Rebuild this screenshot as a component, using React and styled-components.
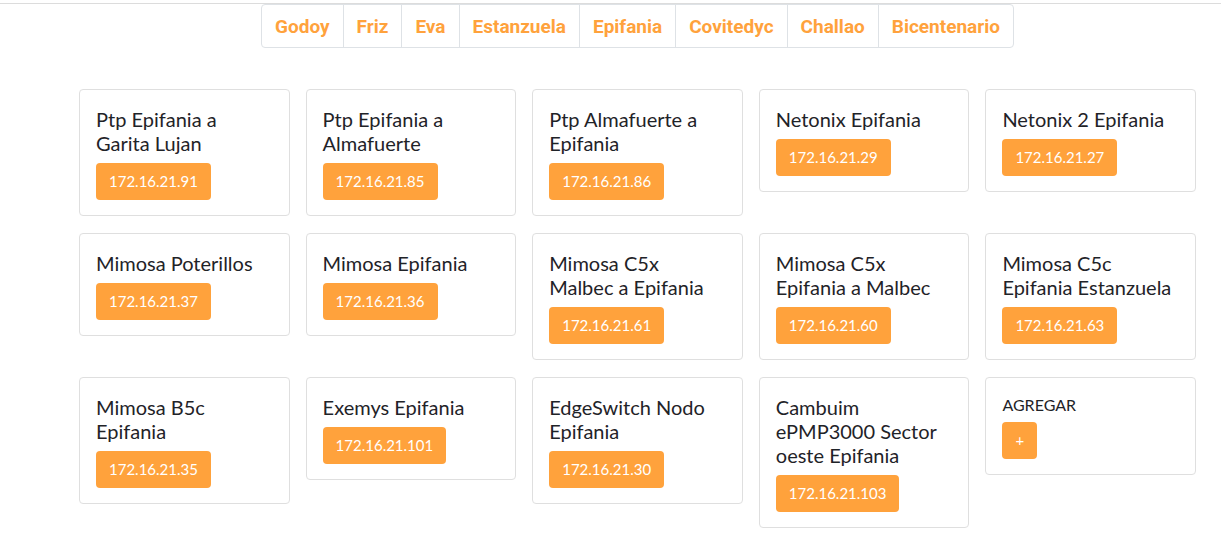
import styled, {createGlobalStyle} from "styled-components";

const GlobalStyle = createGlobalStyle`
  body {
    margin: 0;
    background: #fff;
    font-family: Lato, "Open Sans", sans-serif;
    color: #212529;
  }
`;

const Page = styled.div`
  border-top: 1px solid #dcdcdc;
  margin-top: 3px;
  padding-bottom: 20px;
`;

const Container = styled.div`
  width: 1117px;
  margin-left: 79px;
`;

const Tabs = styled.ul`
  list-style: none;
  margin: 0 auto;
  padding: 0;
  display: flex;
  width: fit-content;
  border: 1px solid #dee2e6;
  border-radius: 4px;
`;

const Tab = styled.li`
  height: 42px;
  display: flex;
  align-items: center;
  padding: 0 13px;
  border-left: 1px solid #dee2e6;
  font-family: Roboto, sans-serif;
  font-weight: 700;
  font-size: 19px;
  color: #ffa23c;

  &:first-child {
    border-left: none;
  }
`;

const Grid = styled.div`
  margin-top: 41px;
  display: grid;
  grid-template-columns: repeat(5, 1fr);
  column-gap: 16px;
  row-gap: 17px;
  align-items: start;
`;

const Card = styled.div`
  border: 1px solid #dfdfdf;
  border-radius: 4px;
  padding: 17px 16px 15px;
`;

const Title = styled.div`
  font-size: ${(p) => (p.$small ? "16px" : "20px")};
  line-height: ${(p) => (p.$small ? "19px" : "24px")};
  margin-bottom: 8px;
  color: #1f2328;
`;

const IpButton = styled.button`
  display: inline-block;
  border: none;
  border-radius: 4px;
  background: #ffa23c;
  color: #fff;
  font-family: Lato, "Open Sans", sans-serif;
  font-size: 15px;
  line-height: 25px;
  padding: 6px 13px;
  cursor: pointer;
`;

const tabs = [
  "Godoy",
  "Friz",
  "Eva",
  "Estanzuela",
  "Epifania",
  "Covitedyc",
  "Challao",
  "Bicentenario",
];

const devices = [
  ["Ptp Epifania a Garita Lujan", "172.16.21.91"],
  ["Ptp Epifania a Almafuerte", "172.16.21.85"],
  ["Ptp Almafuerte a Epifania", "172.16.21.86"],
  ["Netonix Epifania", "172.16.21.29"],
  ["Netonix 2 Epifania", "172.16.21.27"],
  ["Mimosa Poterillos", "172.16.21.37"],
  ["Mimosa Epifania", "172.16.21.36"],
  ["Mimosa C5x Malbec a Epifania", "172.16.21.61"],
  ["Mimosa C5x Epifania a Malbec", "172.16.21.60"],
  ["Mimosa C5c Epifania Estanzuela", "172.16.21.63"],
  ["Mimosa B5c Epifania", "172.16.21.35"],
  ["Exemys Epifania", "172.16.21.101"],
  ["EdgeSwitch Nodo Epifania", "172.16.21.30"],
  ["Cambuim ePMP3000 Sector oeste Epifania", "172.16.21.103"],
];

export default function App() {
  return (
    <>
      <GlobalStyle />
      <Page>
        <Container>
          <Tabs>
            {tabs.map((t) => (
              <Tab key={t}>{t}</Tab>
            ))}
          </Tabs>
          <Grid>
            {devices.map(([name, ip]) => (
              <Card key={ip}>
                <Title>{name}</Title>
                <IpButton>{ip}</IpButton>
              </Card>
            ))}
            <Card>
              <Title $small>AGREGAR</Title>
              <IpButton>+</IpButton>
            </Card>
          </Grid>
        </Container>
      </Page>
    </>
  );
}
